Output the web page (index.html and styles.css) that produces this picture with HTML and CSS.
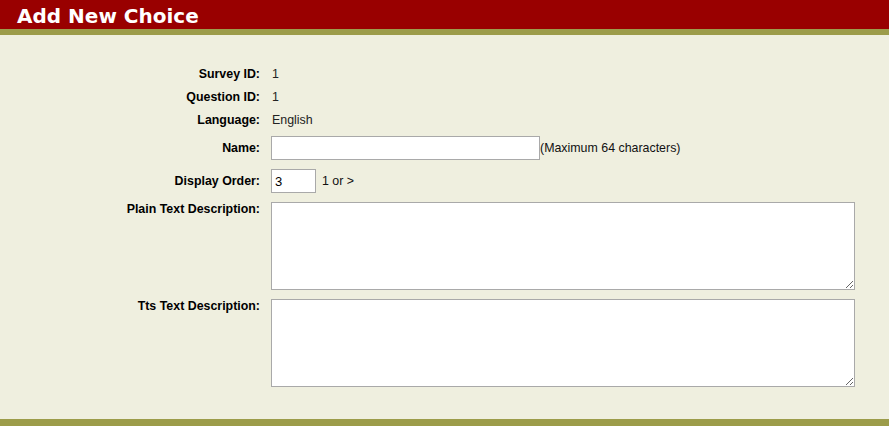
FILE: index.html
```html
<!DOCTYPE html>
<html>
<head>
<meta charset="utf-8">
<link rel="stylesheet" href="styles.css">
</head>
<body>
<div class="page">
  <div class="header"><h1 class="title">Add New Choice</h1></div>
  <div class="rule"></div>
  <form class="form">
    <div class="row text-row">
      <div class="label">Survey ID:</div>
      <div class="value">1</div>
    </div>
    <div class="row text-row">
      <div class="label">Question ID:</div>
      <div class="value">1</div>
    </div>
    <div class="row text-row">
      <div class="label">Language:</div>
      <div class="value">English</div>
    </div>
    <div class="row input-row first-input">
      <div class="label">Name:</div>
      <div class="value field"><input class="name-input" type="text"><span class="hint tight">(Maximum 64 characters)</span></div>
    </div>
    <div class="row input-row">
      <div class="label">Display Order:</div>
      <div class="value field"><input class="order-input" type="text" value="3"><span class="hint">1 or &gt;</span></div>
    </div>
    <div class="row area-row">
      <div class="label">Plain Text Description:</div>
      <div class="value"><textarea class="area"></textarea></div>
    </div>
    <div class="row area-row">
      <div class="label">Tts Text Description:</div>
      <div class="value"><textarea class="area"></textarea></div>
    </div>
  </form>
  <div class="footer"></div>
</div>
</body>
</html>
```

FILE: styles.css
```css
html, body {
  margin: 0;
  padding: 0;
}
body {
  background: #efefdf;
  font-family: "Liberation Sans", Arial, sans-serif;
  font-size: 12.4px;
  color: #000;
}
.page {
  display: flex;
  flex-direction: column;
  min-height: 426px;
}
.header {
  background: #990000;
  height: 29px;
  display: flex;
  align-items: center;
  padding-left: 17px;
}
.title {
  margin: 0;
  color: #fff;
  font-family: "DejaVu Sans", Verdana, sans-serif;
  font-weight: bold;
  font-size: 20px;
  line-height: 29px;
  padding-top: 3px;
}
.rule {
  background: #9c9c4a;
  height: 6px;
}
.form {
  flex: 1;
  padding-top: 27px;
}
.row {
  display: flex;
}
.label {
  width: 260px;
  text-align: right;
  font-weight: bold;
  flex: none;
}
.value {
  margin-left: 11px;
  color: #222;
}
.text-row {
  height: 23px;
  align-items: center;
}
.text-row .value {
  margin-left: 12px;
}
.input-row {
  height: 24px;
  align-items: center;
  margin-top: 9px;
}
.first-input {
  margin-top: 5px;
}
.field {
  display: flex;
  align-items: center;
}
input, textarea {
  box-sizing: border-box;
  border: 1px solid #a9a9a9;
  background: #fff;
  margin: 0;
  font-family: "Liberation Sans", Arial, sans-serif;
  font-size: 13px;
  color: #000;
  outline: none;
}
.name-input {
  width: 269px;
  height: 24px;
  padding: 1px 3px;
}
.order-input {
  width: 45px;
  height: 24px;
  padding: 1px 3px;
}
.hint {
  margin-left: 6px;
  color: #111;
}
.hint.tight {
  margin-left: 0;
}
.area-row {
  margin-top: 9px;
  align-items: flex-start;
}
.area-row .label {
  padding-top: 0;
}
.area {
  display: block;
  width: 584px;
  height: 88px;
  resize: both;
}
.footer {
  background: #9c9c4a;
  height: 7px;
}
```
